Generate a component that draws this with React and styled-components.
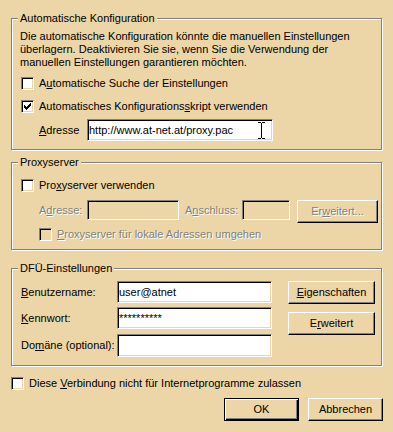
import React from "react";
import styled, { createGlobalStyle, css } from "styled-components";

const face = "#ECD6A8";

const GlobalStyle = createGlobalStyle`
  body {
    margin: 0;
    background: ${face};
    font-family: "Liberation Sans", Arial, sans-serif;
    font-size: 11px;
    color: #000;
  }
`;

const disabledText = css`
  color: #808080;
  text-shadow: 1px 1px 0 #fff;
`;

const Page = styled.div`
  width: 393px;
  height: 432px;
  box-sizing: border-box;
  padding: 18px 10px 0 11px;
  display: flex;
  flex-direction: column;
  overflow: hidden;
  line-height: 13px;
`;

const Group = styled.div`
  position: relative;
  width: 371px;
  height: ${(p) => p.$h}px;
  box-sizing: border-box;
  margin-top: ${(p) => p.$mt || 0}px;
  padding: ${(p) => p.$pad};
  border: 1px solid #808080;
  box-shadow: 1px 1px 0 #fff, inset 1px 1px 0 #fff;
  display: flex;
  flex-direction: column;
`;

const Legend = styled.span`
  position: absolute;
  top: -7px;
  left: 6px;
  padding: 0 2px;
  background: ${face};
  line-height: 13px;
  white-space: nowrap;
`;

const Desc = styled.p`
  margin: 0;
  line-height: 13px;
  white-space: nowrap;
`;

const CheckRow = styled.div`
  display: flex;
  align-items: flex-start;
  margin-top: ${(p) => p.$mt || 0}px;
  margin-left: ${(p) => p.$ml || 0}px;
  line-height: 13px;
  white-space: nowrap;
  ${(p) => p.$disabled && disabledText}
`;

const CheckText = styled.span`
  white-space: pre;
`;

const BoxFrame = styled.span`
  width: 13px;
  height: 13px;
  box-sizing: border-box;
  flex-shrink: 0;
  margin-right: 5px;
  border: 1px solid;
  border-color: #808080 #fff #fff #808080;
  box-shadow: inset 1px 1px 0 #000, inset -1px -1px 0 ${face};
  background: ${(p) => (p.$disabled ? face : "#fff")};
  display: flex;
  align-items: center;
  justify-content: center;
`;

const CheckBox = ({ checked, disabled }) => (
  <BoxFrame $disabled={disabled}>
    {checked && (
      <svg width="7" height="7" viewBox="0 0 7 7" shapeRendering="crispEdges">
        <path
          fill="#000"
          d="M6 0h1v1h-1z M5 1h2v1h-2z M0 2h1v1h-1z M4 2h3v1h-3z M0 3h2v1h-2z M3 3h3v1h-3z M0 4h5v1h-5z M1 5h3v1h-3z M2 6h1v1h-1z"
        />
      </svg>
    )}
  </BoxFrame>
);

const FieldRow = styled.div`
  display: flex;
  align-items: ${(p) => (p.$top ? "flex-start" : "center")};
  margin-top: ${(p) => p.$mt || 0}px;
  margin-left: ${(p) => p.$ml || 0}px;
`;

const FieldLabel = styled.span`
  width: ${(p) => p.$w}px;
  margin-left: ${(p) => p.$ml || 0}px;
  flex-shrink: 0;
  line-height: ${(p) => p.$lh || 13}px;
  white-space: nowrap;
  ${(p) => p.$disabled && disabledText}
`;

const Field = styled.div`
  position: relative;
  width: ${(p) => p.$w}px;
  height: ${(p) => p.$h}px;
  box-sizing: border-box;
  flex-shrink: 0;
  padding: 0 1px;
  border: 1px solid;
  border-color: #808080 #fff #fff #808080;
  box-shadow: inset 1px 1px 0 #000, inset -1px -1px 0 ${face};
  background: ${(p) => (p.$disabled ? face : "#fff")};
  display: flex;
  align-items: center;
  white-space: nowrap;
  overflow: hidden;
`;

const Cursor = styled.svg`
  position: absolute;
  top: 2px;
  right: 7px;
`;

const Button = styled.div`
  width: ${(p) => p.$w}px;
  height: 23px;
  box-sizing: border-box;
  flex-shrink: 0;
  margin-left: ${(p) => p.$ml || 0}px;
  margin-top: ${(p) => p.$mt || 0}px;
  border: 1px solid;
  border-color: #fff #000 #000 #fff;
  box-shadow: inset -1px -1px 0 #808080;
  background: ${face};
  display: flex;
  align-items: center;
  justify-content: center;
  white-space: nowrap;
  ${(p) =>
    p.$default &&
    css`
      border-color: #000;
      box-shadow: inset 1px 1px 0 #fff, inset -1px -1px 0 #000,
        inset -2px -2px 0 #808080;
    `}
  ${(p) => p.$disabled && disabledText}
`;

const Columns = styled.div`
  display: flex;
  align-items: flex-start;
`;

const Stack = styled.div`
  display: flex;
  flex-direction: column;
  margin-left: ${(p) => p.$ml || 0}px;
`;

const ButtonBar = styled.div`
  display: flex;
  justify-content: flex-end;
  gap: 9px;
  margin-top: 8px;
`;

export default function App() {
  return (
    <Page>
      <GlobalStyle />

      <Group $h={132} $pad="11px 8px 0 8px">
        <Legend>Automatische Konfiguration</Legend>
        <Desc>
          Die automatische Konfiguration könnte die manuellen Einstellungen
          <br />
          überlagern. Deaktivieren Sie sie, wenn Sie die Verwendung der
          <br />
          manuellen Einstellungen garantieren möchten.
        </Desc>
        <CheckRow $mt={8} $ml={1}>
          <CheckBox />
          <CheckText>
            A<u>u</u>tomatische Suche der Einstellungen
          </CheckText>
        </CheckRow>
        <CheckRow $mt={10} $ml={1}>
          <CheckBox checked />
          <CheckText>
            Automatisches Konfigurations<u>s</u>kript verwenden
          </CheckText>
        </CheckRow>
        <FieldRow $mt={6} $ml={19}>
          <FieldLabel $w={48}>
            <u>A</u>dresse
          </FieldLabel>
          <Field $w={186} $h={22}>
            http://www.at-net.at/proxy.pac
            <Cursor width="7" height="17" viewBox="0 0 7 17" shapeRendering="crispEdges">
              <path
                fill="#000"
                d="M0 0h3v1h-3z M4 0h3v1h-3z M3 1h1v15h-1z M0 16h3v1h-3z M4 16h3v1h-3z"
              />
            </Cursor>
          </Field>
        </FieldRow>
      </Group>

      <Group $mt={12} $h={88} $pad="16px 8px 0 8px">
        <Legend>Proxyserver</Legend>
        <CheckRow $ml={1}>
          <CheckBox />
          <CheckText>
            Pro<u>x</u>yserver verwenden
          </CheckText>
        </CheckRow>
        <FieldRow $mt={8} $ml={19} $top>
          <FieldLabel $w={48} $lh={20} $disabled>
            A<u>d</u>resse:
          </FieldLabel>
          <Field $w={92} $h={20} $disabled />
          <FieldLabel $w={57} $ml={6} $lh={20} $disabled>
            A<u>n</u>schluss:
          </FieldLabel>
          <Field $w={48} $h={20} $disabled />
          <Button $w={81} $ml={7} $disabled>
            Er<u>w</u>eitert...
          </Button>
        </FieldRow>
        <CheckRow $mt={5} $ml={19} $disabled>
          <CheckBox disabled />
          <CheckText>
            <u>P</u>roxyserver für lokale Adressen umgehen
          </CheckText>
        </CheckRow>
      </Group>

      <Group $mt={18} $h={98} $pad="12px 8px 0 9px">
        <Legend>DFÜ-Einstellungen</Legend>
        <Columns>
          <Stack>
            <FieldRow>
              <FieldLabel $w={96}>
                <u>B</u>enutzername:
              </FieldLabel>
              <Field $w={155} $h={22}>user@atnet</Field>
            </FieldRow>
            <FieldRow $mt={4}>
              <FieldLabel $w={96}>
                <u>K</u>ennwort:
              </FieldLabel>
              <Field $w={155} $h={22}>**********</Field>
            </FieldRow>
            <FieldRow $mt={5}>
              <FieldLabel $w={96}>
                Do<u>m</u>äne (optional):
              </FieldLabel>
              <Field $w={155} $h={23} />
            </FieldRow>
          </Stack>
          <Stack $ml={16}>
            <Button $w={87}>
              <u>E</u>igenschaften
            </Button>
            <Button $w={87} $mt={8}>
              E<u>r</u>weitert
            </Button>
          </Stack>
        </Columns>
      </Group>

      <CheckRow $mt={11}>
        <CheckBox />
        <CheckText>
          Diese <u>V</u>erbindung nicht für Internetprogramme zulassen
        </CheckText>
      </CheckRow>

      <ButtonBar>
        <Button $w={75} $default>
          OK
        </Button>
        <Button $w={75}>Abbrechen</Button>
      </ButtonBar>
    </Page>
  );
}
